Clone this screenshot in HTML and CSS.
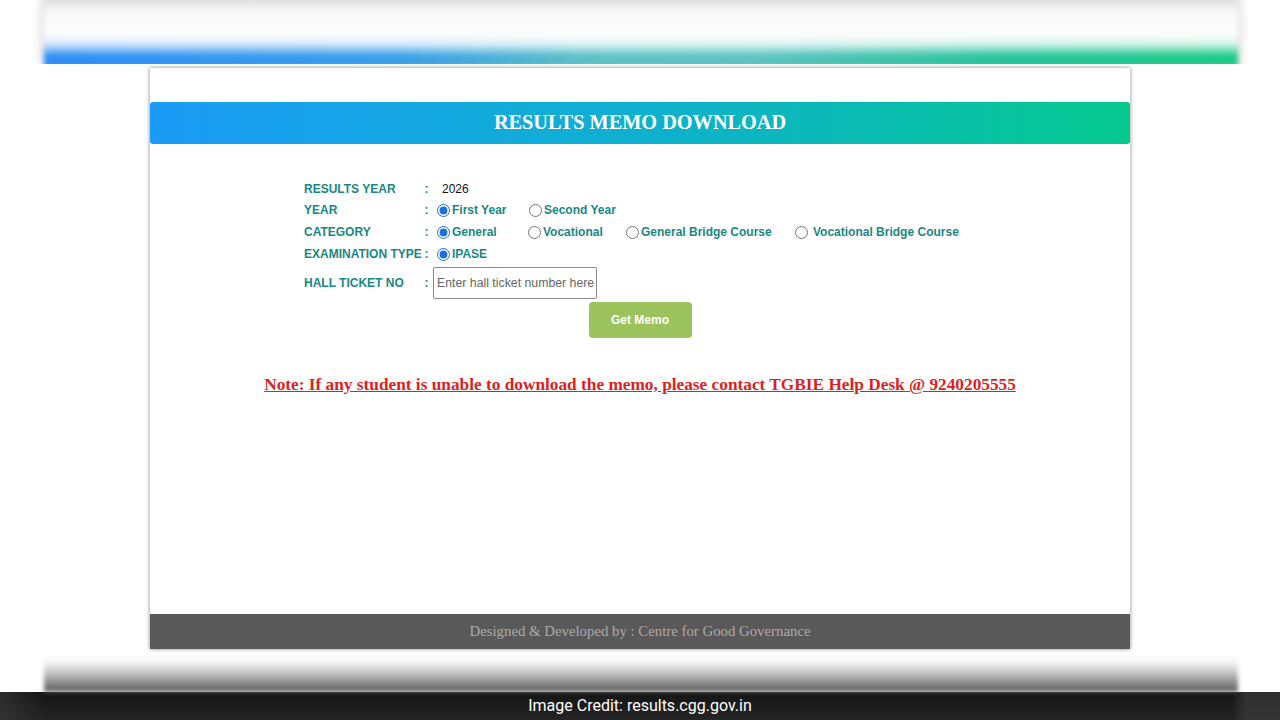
FILE: index.html
```html
<!DOCTYPE html>
<html lang="en">
<head>
<meta charset="utf-8">
<title>Results Memo Download</title>
<link rel="stylesheet" href="styles.css">
</head>
<body>
<div class="top-band"><div class="top-band-inner"></div></div>
<div class="card">
  <div class="card-head"><h1 class="title">RESULTS MEMO DOWNLOAD</h1></div>
  <div class="card-body">
    <div class="form">
      <div class="row row-first"><span class="lbl">RESULTS YEAR</span><span class="colon">:</span><span class="val year-val">2026</span></div>
      <div class="row"><span class="lbl">YEAR</span><span class="colon">:</span>
        <div class="val opts opts-year">
          <label class="opt"><input type="radio" name="year" checked>First Year</label>
          <label class="opt"><input type="radio" name="year">Second Year</label>
        </div>
      </div>
      <div class="row"><span class="lbl">CATEGORY</span><span class="colon">:</span>
        <div class="val opts opts-cat">
          <label class="opt"><input type="radio" name="cat" checked>General</label>
          <label class="opt"><input type="radio" name="cat">Vocational</label>
          <label class="opt"><input type="radio" name="cat">General Bridge Course</label>
          <label class="opt opt-gap"><input type="radio" name="cat">Vocational Bridge Course</label>
        </div>
      </div>
      <div class="row"><span class="lbl">EXAMINATION TYPE</span><span class="colon">:</span>
        <div class="val opts">
          <label class="opt"><input type="radio" name="exam" checked>IPASE</label>
        </div>
      </div>
      <div class="row row-ticket"><span class="lbl">HALL TICKET NO</span><span class="colon">:</span>
        <div class="val"><input class="ticket" type="text" placeholder="Enter hall ticket number here"></div>
      </div>
    </div>
    <div class="btn-row"><button class="btn" type="button">Get Memo</button></div>
    <p class="note">Note: If any student is unable to download the memo, please contact TGBIE Help Desk @ 9240205555</p>
  </div>
  <div class="card-foot">Designed &amp; Developed by : Centre for Good Governance</div>
</div>
<div class="bottom-band"></div>
<div class="credit">Image Credit: results.cgg.gov.in</div>
</body>
</html>
```
FILE: styles.css
```css
* { box-sizing: border-box; }
html, body {
  margin: 0;
  padding: 0;
  width: 1280px;
  height: 720px;
  overflow: hidden;
  background: #ffffff;
  font-family: "Liberation Sans", Arial, sans-serif;
}

.top-band {
  height: 64px;
  padding: 0 42px 0 44px;
  overflow: hidden;
}
.top-band-inner {
  height: 72px;
  margin-top: -4px;
  filter: blur(2.5px);
  box-shadow: 0 0 10px rgba(0,0,0,0.25);
  background:
    linear-gradient(to bottom, #d8d8d8 0px, #e8e8e8 8px, #f9f9f9 16px, #fefefe 38px, rgba(255,255,255,0.8) 48px, rgba(255,255,255,0) 60px),
    linear-gradient(to right, #2f8ef8 0%, #3a9fe8 30%, #5cc0c8 45%, #5cc3c0 60%, #27c39c 80%, #1ecb88 100%);
}

.card {
  width: 980px;
  height: 581px;
  margin: 4px auto 0;
  background: #fff;
  box-shadow: 0 0 4px rgba(0,0,0,0.5);
  display: flex;
  flex-direction: column;
}
.card-head {
  padding-top: 34px;
}
.title {
  margin: 0;
  height: 42px;
  border-radius: 3px;
  background: linear-gradient(to right, #1b9bf6 0%, #0eb0cf 50%, #05c98e 100%);
  color: #fff;
  font-family: "Liberation Serif", "Times New Roman", serif;
  font-weight: bold;
  font-size: 20.3px;
  line-height: 40px;
  text-align: center;
}
.card-body {
  flex: 1;
}
.form {
  margin: 34px 0 0 154px;
  color: #198784;
  font-weight: bold;
  font-size: 12px;
}
.row {
  display: flex;
  align-items: center;
  height: 22px;
}
.row-first { height: 21px; }
.lbl {
  width: 117px;
  white-space: nowrap;
}
.colon {
  width: 11px;
  text-align: center;
}
.val {
  display: flex;
  align-items: center;
}
.year-val {
  padding-left: 10px;
  color: #111;
  font-weight: normal;
}
.opt {
  display: flex;
  align-items: center;
  white-space: nowrap;
}
.opt input {
  margin: 0 2px 0 5px;
  width: 13px;
  height: 13px;
  accent-color: #1a6fe3;
}
.opts-year .opt:first-child { width: 92px; }
.opts-cat .opt:nth-child(1) { width: 91px; }
.opts-cat .opt:nth-child(2) { width: 98px; }
.opts-cat .opt:nth-child(3) { width: 169px; }
.opt-gap input { margin-right: 5px; }

.row-ticket {
  height: 32px;
  margin-top: 2px;
}
.ticket {
  width: 164px;
  height: 32px;
  margin-left: 1px;
  border: 1px solid #8a8a8a;
  border-radius: 2px;
  padding: 0 0 0 3px;
  font-family: "Liberation Sans", Arial, sans-serif;
  font-size: 12.3px;
  color: #333;
}
.ticket::placeholder { color: #666; }

.btn-row {
  display: flex;
  justify-content: center;
  margin-top: 3px;
}
.btn {
  width: 103px;
  height: 36px;
  border: none;
  border-radius: 4px;
  background: #9cc35c;
  color: #fff;
  font-family: "Liberation Sans", Arial, sans-serif;
  font-weight: bold;
  font-size: 12px;
}
.note {
  margin: 37px 0 0;
  text-align: center;
  color: #de1f22;
  font-family: "Liberation Serif", "Times New Roman", serif;
  font-weight: bold;
  font-size: 17.3px;
  line-height: 20px;
  text-decoration: underline;
}
.card-foot {
  height: 35px;
  background: #595959;
  color: #ababab;
  font-family: "Liberation Serif", "Times New Roman", serif;
  font-size: 14.8px;
  line-height: 35px;
  text-align: center;
}

.bottom-band {
  height: 37px;
  margin: 6px 42px 0 44px;
  filter: blur(2px);
  background: linear-gradient(to bottom, #ffffff 0px, #f2f2f2 8px, #c4c4c4 18px, #8a8a8a 28px, #5c5c5c 37px);
}
.credit {
  height: 28px;
  background:
    linear-gradient(to right, rgba(60,60,60,0.6) 0px, rgba(40,40,40,0) 46px, rgba(40,40,40,0) 1232px, rgba(60,60,60,0.7) 1246px),
    linear-gradient(to bottom, #141414, #242424);
  color: #fff;
  font-family: "Liberation Sans Narrow", "Roboto", sans-serif;
  font-size: 16px;
  line-height: 28px;
  text-align: center;
}
```
